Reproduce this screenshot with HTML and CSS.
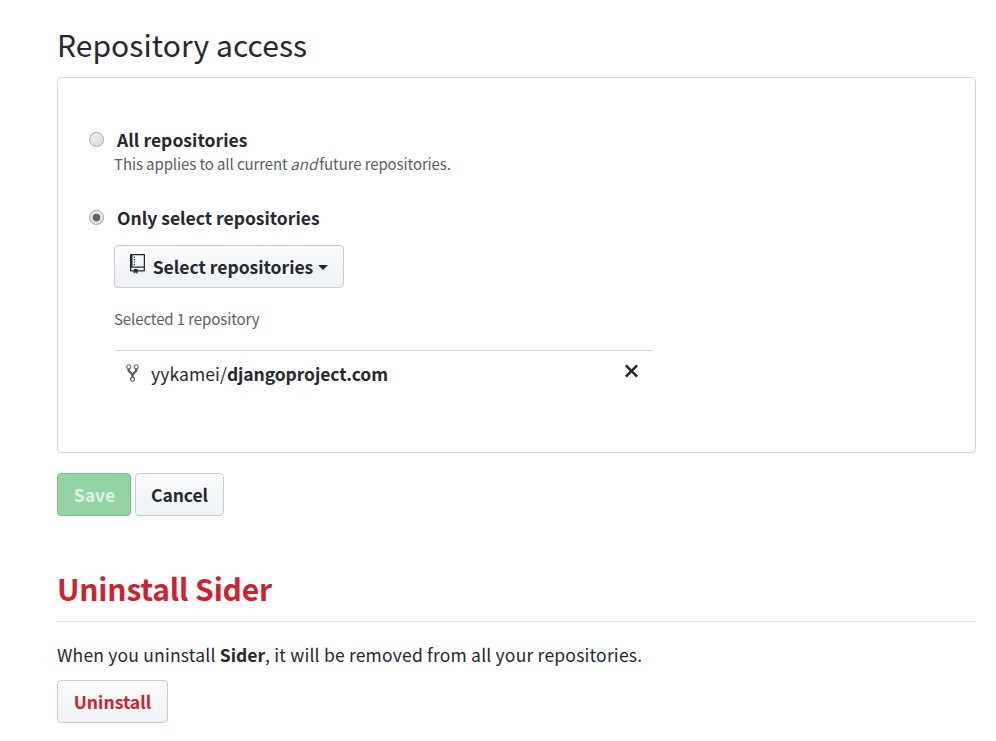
FILE: index.html
```html
<!DOCTYPE html>
<html lang="en">
<head>
<meta charset="utf-8">
<title>Repository access</title>
<link rel="stylesheet" href="styles.css">
</head>
<body>
<main class="page">
  <h2 class="title">Repository access</h2>
  <section class="panel">
    <div class="option all">
      <span class="radio"></span><label>All repositories</label>
    </div>
    <p class="note">This applies to all current <em>and</em> future repositories.</p>
    <div class="option only">
      <span class="radio checked"></span><label>Only select repositories</label>
    </div>
    <button class="btn select">
      <svg class="repo" viewBox="0 0 12 16"><path fill-rule="evenodd" d="M4 9H3V8h1v1zm0-3H3v1h1V6zm0-2H3v1h1V4zm0-2H3v1h1V2zm8-1v12c0 .55-.45 1-1 1H6v2l-1.500-1.500L3 16v-2H1c-.55 0-1-.45-1-1V1c0-.55.45-1 1-1h10c.55 0 1 .45 1 1zm-1 10H1v2h2v-1h3v1h5v-2zm0-10H2v9h9V1z"/></svg>
      <span>Select repositories</span><i class="caret"></i>
    </button>
    <p class="count">Selected 1 repository</p>
    <div class="repo-row">
      <svg class="fork" viewBox="0 0 10 16"><path fill-rule="evenodd" d="M8 1a1.993 1.993 0 0 0-1 3.720V6L5 8 3 6V4.720A1.993 1.993 0 0 0 2 1a1.993 1.993 0 0 0-1 3.720V6.500l3 3v1.780A1.993 1.993 0 0 0 5 15a1.993 1.993 0 0 0 1-3.720V9.500l3-3V4.720A1.993 1.993 0 0 0 8 1zM2 4.200C1.340 4.200.8 3.650.8 3c0-.65.55-1.200 1.200-1.200.65 0 1.200.55 1.200 1.200 0 .65-.55 1.200-1.200 1.200zm3 10c-.66 0-1.200-.55-1.200-1.200 0-.65.55-1.200 1.200-1.200.65 0 1.200.55 1.200 1.200 0 .65-.55 1.200-1.200 1.200zm3-10c-.66 0-1.200-.55-1.200-1.200 0-.65.55-1.200 1.200-1.200.65 0 1.200.55 1.200 1.200 0 .65-.55 1.200-1.200 1.200z"/></svg>
      <span class="name">yykamei/<b>djangoproject.com</b></span>
      <svg class="remove" viewBox="0 0 12 16"><path fill-rule="evenodd" d="M7.480 8l3.750 3.750-1.480 1.480L6 9.480l-3.750 3.750-1.480-1.480L4.520 8 .77 4.250l1.480-1.480L6 6.520l3.750-3.750 1.480 1.480L7.480 8z"/></svg>
    </div>
  </section>
  <div class="actions">
    <button class="btn save">Save</button>
    <button class="btn cancel">Cancel</button>
  </div>
  <h2 class="danger-title">Uninstall Sider</h2>
  <p class="warning">When you uninstall <b>Sider</b>, it will be removed from all your repositories.</p>
  <button class="btn uninstall">Uninstall</button>
</main>
</body>
</html>
```
FILE: styles.css
```css
* { box-sizing: border-box; }
body { margin: 0; background: #fff; color: #24292e; font: 17.5px/28px "Noto Sans CJK JP", sans-serif; }
h2, p { margin: 0; }
b { font-weight: 700; }
.page { width: 919px; margin-left: 57px; padding-top: 22px; }
.title { height: 55px; font-size: 30px; line-height: 44px; font-weight: 400; letter-spacing: .06px; }
.panel { height: 376px; padding: 48px 31px; border: 1px solid #d1d5da; border-radius: 4px; }
.option { display: flex; align-items: center; height: 26px; font-weight: 700; letter-spacing: .05px; }
.option label { padding-top: 2px; }
.only label { letter-spacing: 0; }
.radio { width: 15px; height: 15px; margin-right: 13px; border: 1px solid #a5a5a5; border-radius: 50%; background: linear-gradient(#eee, #dcdcdc); }
.radio.checked { background: radial-gradient(circle, #606060 0 3.500px, transparent 4.200px), linear-gradient(#eee, #dcdcdc); }
.note, .count { margin-left: 25px; color: #586069; font-size: 15px; line-height: 20px; letter-spacing: -.1px; }
.note { margin-top: 2px; }
.note em { margin: 0 -1.500px 0 -.5px; letter-spacing: .1px; }
.only { margin-top: 30px; }
.btn { display: flex; align-items: center; justify-content: center; height: 43px; padding: 0; border: 1px solid #c8cccf; border-radius: 4px; background: linear-gradient(#fafbfc, #eff3f6 90%); color: #24292e; font: inherit; font-weight: 700; }
.select { width: 230px; margin: 15px 0 0 25px; }
.repo { width: 15px; height: 20px; margin: -6px 8px 0 0; fill: #24292e; }
.caret { margin: 2px 0 0 5px; border: 5px solid transparent; border-top-color: #24292e; border-bottom: 0; }
.count { margin-top: 21px; }
.repo-row { display: flex; width: 536px; height: 48px; margin: 21px 0 0 27px; padding: 0 13px 0 10px; align-items: center; border-top: 1px solid #d1d5da; }
.fork { width: 13px; height: 20px; margin: -3px 12px 0 0; fill: #586069; }
.name { margin-top: -2px; letter-spacing: .1px; }
.name b { letter-spacing: -.1px; }
.remove { width: 15px; height: 20px; margin: -8px 0 0 auto; fill: #24292e; }
.actions { display: flex; gap: 4px; margin-top: 20px; }
.save { width: 74px; padding-left: 1px; border-color: #84b892; background: #94d3a2; color: #dff2e3; }
.cancel { width: 89px; letter-spacing: -.1px; }
.danger-title { height: 68px; margin-top: 38px; border-bottom: 1px solid #e1e4e8; color: #cb2431; font-size: 30px; line-height: 68px; font-weight: 700; letter-spacing: -.15px; }
.warning { margin-top: 19px; letter-spacing: .2px; }
.warning b { letter-spacing: 0; }
.uninstall { width: 111px; margin-top: 11px; color: #cb2431; }
```
